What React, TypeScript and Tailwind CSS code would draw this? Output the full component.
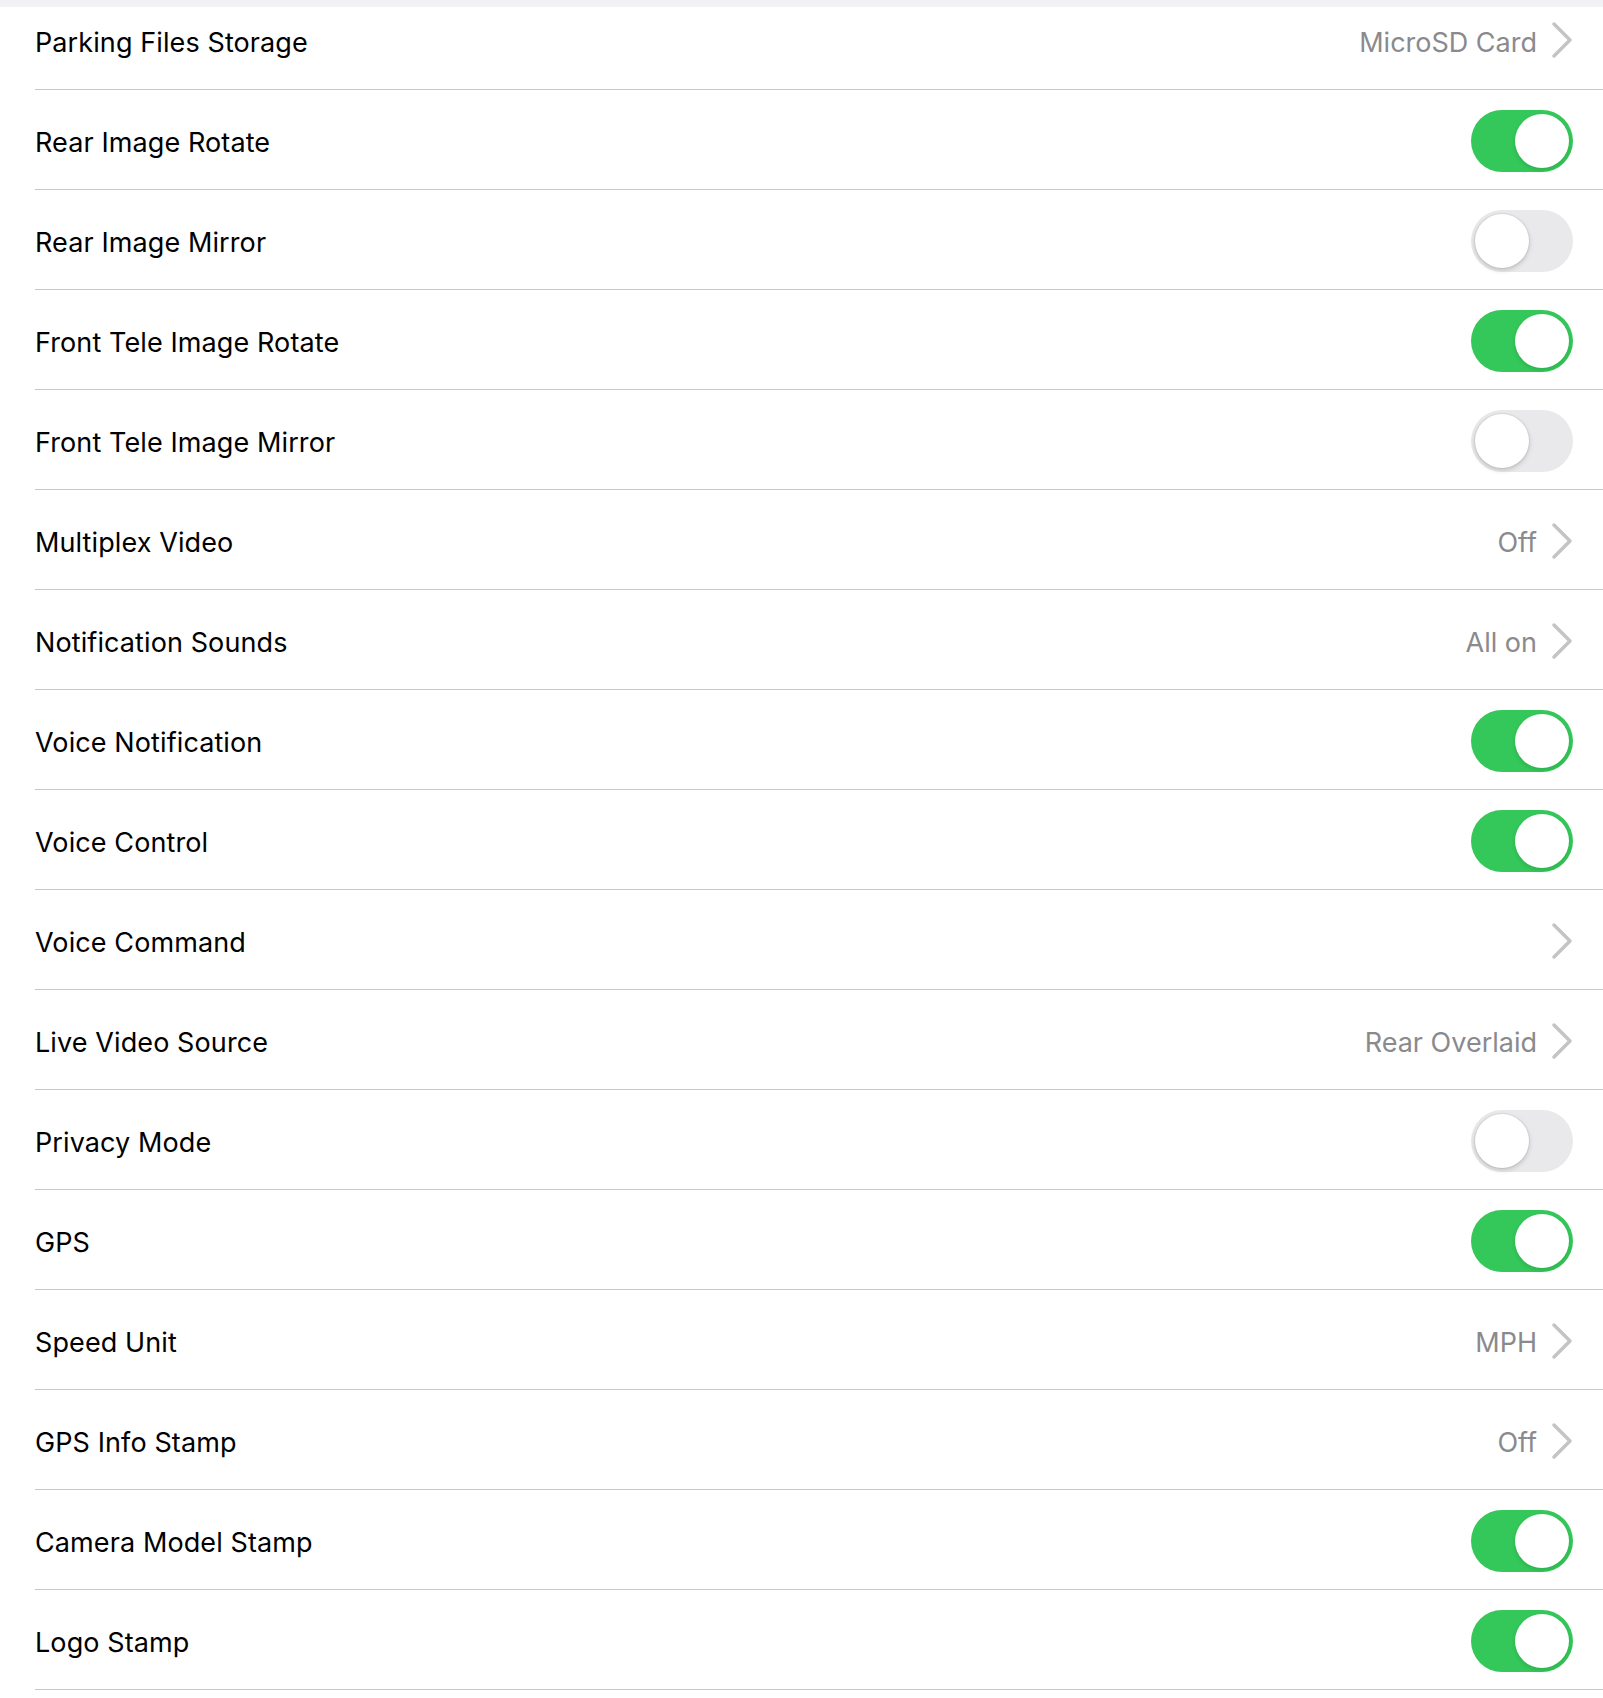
type Row = {
    label: string;
    toggle?: boolean;
    value?: string;
    chevron?: boolean;
};

const rows: Row[] = [
    {label: "Parking Files Storage", value: "MicroSD Card", chevron: true},
    {label: "Rear Image Rotate", toggle: true},
    {label: "Rear Image Mirror", toggle: false},
    {label: "Front Tele Image Rotate", toggle: true},
    {label: "Front Tele Image Mirror", toggle: false},
    {label: "Multiplex Video", value: "Off", chevron: true},
    {label: "Notification Sounds", value: "All on", chevron: true},
    {label: "Voice Notification", toggle: true},
    {label: "Voice Control", toggle: true},
    {label: "Voice Command", chevron: true},
    {label: "Live Video Source", value: "Rear Overlaid", chevron: true},
    {label: "Privacy Mode", toggle: false},
    {label: "GPS", toggle: true},
    {label: "Speed Unit", value: "MPH", chevron: true},
    {label: "GPS Info Stamp", value: "Off", chevron: true},
    {label: "Camera Model Stamp", toggle: true},
    {label: "Logo Stamp", toggle: true},
];

const Switch = ({on}: { on: boolean }) => (
    <div
        className={`flex h-[62px] w-[102px] items-center rounded-full p-[4px] ${on ? "justify-end bg-[#34c759]" : "justify-start bg-[#e9e9eb]"}`}
    >
        <div
            className={`h-[54px] w-[54px] rounded-full bg-white ${on ? "shadow-[0_2px_4px_rgba(0,0,0,0.12)]" : "shadow-[0_2px_5px_rgba(0,0,0,0.18),0_0_0_1px_rgba(0,0,0,0.05)]"}`}
        />
    </div>
);

const Chevron = () => (
    <svg width="22" height="38" viewBox="0 0 22 38" fill="none">
        <path d="M3 3 L19 19 L3 35" stroke="#c4c4c7" strokeWidth="3.5" strokeLinecap="round" strokeLinejoin="round"/>
    </svg>
);

export default function App() {
    return (
        <div className="min-h-[1698px] w-full bg-white font-['Inter','Liberation_Sans',sans-serif] text-[27px] text-black">
            <div className="h-[7px] bg-[#f2f2f4]"/>
            {rows.map((row, i) => (
                <div
                    key={row.label}
                    className={`ml-[35px] flex items-center justify-between border-b border-[#c8c7cc] pr-[30px] ${i === 0 ? "h-[83px] pb-[16px]" : "h-[100px] pt-[2px]"}`}
                >
                    <span className="mt-[6px] tracking-[0.1px]">{row.label}</span>
                    <div className="flex items-center gap-[14px]">
                        {row.value && <span className="mt-[6px] text-[#8a8a8e]">{row.value}</span>}
                        {row.chevron && <Chevron/>}
                        {row.toggle !== undefined && <Switch on={row.toggle}/>}
                    </div>
                </div>
            ))}
        </div>
    );
}
